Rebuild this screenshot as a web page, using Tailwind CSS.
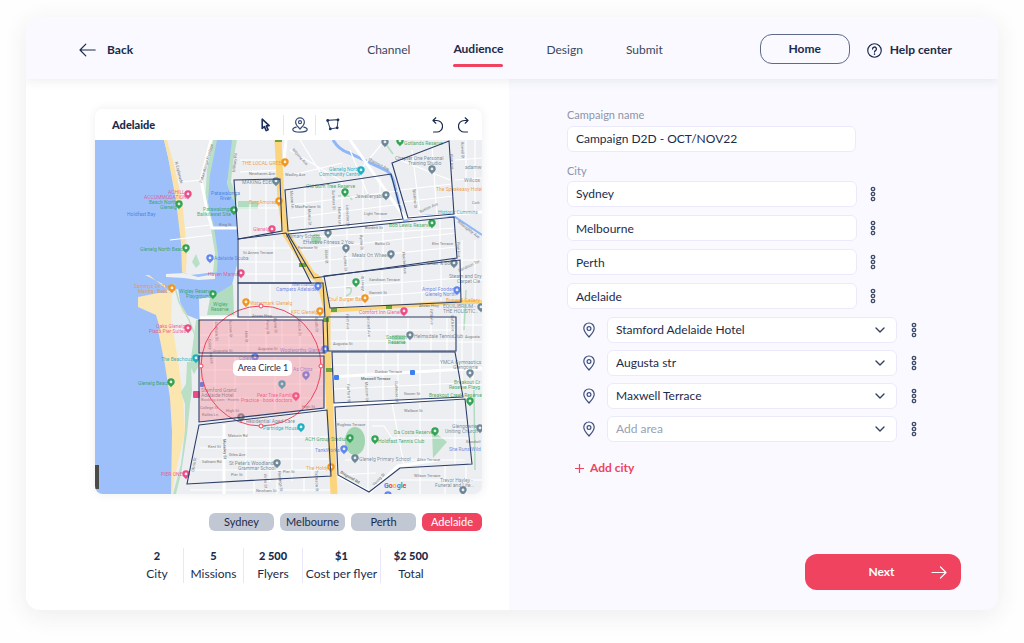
<!DOCTYPE html>
<html lang="en">
<head>
  <meta charset="UTF-8" />
  <meta name="viewport" content="width=device-width, initial-scale=1.0" />
  <title>Campaign - Audience</title>
  <script src="https://cdn.jsdelivr.net/npm/@tailwindcss/browser@4"></script>
</head>
<body class="bg-[#fefefe] text-[#1b2b4b] text-[12px] leading-4 font-['Lato','Open_Sans',sans-serif]">

  <!-- shared icons -->
  <svg class="hidden">
    <symbol id="dots" viewBox="0 0 6 16">
      <g fill="none" stroke="#3d4b69" stroke-width="1.3">
        <circle cx="3" cy="3" r="1.7" />
        <circle cx="3" cy="8" r="1.7" />
        <circle cx="3" cy="13" r="1.7" />
      </g>
    </symbol>
    <symbol id="place" viewBox="0 0 12 16">
      <g fill="none" stroke="#3c4f7c" stroke-width="1.2" stroke-linejoin="round">
        <path d="M6 15C3.6 12.4 0.8 9.6 0.8 6.2a5.2 5.2 0 0 1 10.4 0C11.2 9.6 8.4 12.4 6 15z" />
        <circle cx="6" cy="6.6" r="1.9" />
      </g>
    </symbol>
    <symbol id="chevron" viewBox="0 0 10 6">
      <path d="M1 1l4 4 4-4" fill="none" stroke="#33415f" stroke-width="1.4" stroke-linecap="round" stroke-linejoin="round" />
    </symbol>
    <symbol id="pin" viewBox="0 0 8 10">
      <path d="M4 9.6C3.6 7.8 0.3 6.8 0.3 4a3.7 3.7 0 0 1 7.4 0C7.7 6.8 4.4 7.8 4 9.6z" />
      <circle cx="4" cy="3.9" r="1.4" fill="#fff" fill-opacity=".85" />
    </symbol>
  </svg>

  <div class="mx-[26px] mt-[17px] mb-[33px] min-h-[calc(100vh-50px)] flex flex-col rounded-[14px] bg-white shadow-[0_5px_24px_rgba(40,50,60,0.09)] overflow-hidden">

    <header class="relative z-10 h-[62px] shrink-0 flex items-center bg-[#f9f9ff] pl-[53px] pr-[46px] shadow-[0_2px_10px_rgba(40,50,80,0.09)]">
      <a href="#" class="flex items-center gap-[11px] font-bold pt-[4px]">
        <svg class="w-[17px] h-[14px]" viewBox="0 0 17 14" fill="none" stroke="#1b2b4b" stroke-width="1.2" stroke-linecap="round" stroke-linejoin="round"><path d="M16.2 7H1M6.8 1.2L1 7l5.8 5.8" /></svg>
        Back
      </a>
      <nav class="ml-auto flex items-center gap-[43px] pt-[4px] text-[#3a4662]">
        <a href="#">Channel</a>
        <a href="#" class="relative font-bold text-[#1b2b4b] pb-[3px]">Audience
          <span class="absolute left-0 right-0 top-[23px] h-[3px] rounded-full bg-[#ef4360]"></span>
        </a>
        <a href="#">Design</a>
        <a href="#">Submit</a>
      </nav>
      <button type="button" class="ml-[97px] mt-[2px] w-[90px] h-[30px] rounded-[12px] border border-[#5d6a88] font-bold">Home</button>
      <a href="#" class="ml-[17px] flex items-center gap-[8px] pt-[4px] font-bold">
        <svg class="w-[15px] h-[15px]" viewBox="0 0 14 14" fill="none" stroke="#1b2b4b" stroke-linecap="round" stroke-linejoin="round"><circle cx="7" cy="7" r="6.3" stroke-width="1.1" /><path d="M5.2 5.6a1.8 1.8 0 1 1 2.7 1.5c-.6.4-.9.7-.9 1.3" stroke-width="1.2" /><path d="M7 10.3v.1" stroke-width="1.4" /></svg>
        Help center
      </a>
    </header>

    <main class="flex-1 grid grid-cols-[483fr_489fr]">

      <section class="pl-[69px] pr-[27px] pt-[30px]">
        <div class="rounded-[8px] shadow-[0_0_10px_rgba(40,50,80,0.09)] overflow-hidden">
          <div class="h-[31px] flex items-center bg-white pl-[17px] pr-[13px]">
            <h2 class="text-[11px] font-black">Adelaide</h2>
            <div class="ml-auto flex items-center">
              <button type="button" aria-label="Select" class="w-[34px] h-[20px] flex items-center justify-center">
                <svg class="w-[10px] h-[14px]" viewBox="0 0 10 14" fill="none" stroke="#1f2f5c" stroke-width="1.6" stroke-linejoin="round"><path d="M1.2 1.2v9.2l2.2-1.8 1.8 4 1.9-.9-1.8-3.8 2.9-.3z" /></svg>
              </button>
              <button type="button" aria-label="Add pin" class="w-[33px] h-[20px] flex items-center justify-center border-x border-[#e4e4f6]">
                <svg class="w-[16px] h-[16px]" viewBox="0 0 16 16" fill="none" stroke="#3c4f7c" stroke-width="1.2" stroke-linejoin="round" stroke-linecap="round"><path d="M8 12C6 9.8 3.6 8 3.6 5.2a4.4 4.4 0 0 1 8.8 0C12.4 8 10 9.8 8 12z" /><circle cx="8" cy="5.2" r="1.5" /><path d="M4.2 10.2C2 10.7.8 11.5.8 12.5.8 14 4 15.1 8 15.1s7.2-1.1 7.2-2.6c0-1-1.2-1.8-3.4-2.3" /></svg>
              </button>
              <button type="button" aria-label="Draw area" class="w-[33px] h-[20px] flex items-center justify-center">
                <svg class="w-[14px] h-[13px]" viewBox="0 0 14 13" fill="#1f2f5c" stroke="#3c4f7c" stroke-width="1.1"><path d="M1.5 2.4L12 1.6 11.2 9.8 4.3 11z" fill="none" /><g stroke="none"><circle cx="1.7" cy="2.5" r="1.4" /><circle cx="12" cy="1.8" r="1.4" /><circle cx="11.2" cy="9.8" r="1.4" /><circle cx="4.3" cy="10.9" r="1.4" /></g></svg>
              </button>
            </div>
            <div class="ml-[83px] flex gap-[15px]">
              <button type="button" aria-label="Undo">
                <svg class="w-[11px] h-[16px]" viewBox="0 0 11 16" fill="none" stroke="#1b2b4b" stroke-width="1.2" stroke-linecap="round" stroke-linejoin="round"><path d="M1 3.500h3.800a5.600 5.600 0 0 1 0 11.500H1.500M3.800.8L1 3.500l2.800 2.700" /></svg>
              </button>
              <button type="button" aria-label="Redo">
                <svg class="w-[11px] h-[16px]" viewBox="0 0 11 16" fill="none" stroke="#1b2b4b" stroke-width="1.2" stroke-linecap="round" stroke-linejoin="round"><path d="M10 3.500H6.200a5.600 5.600 0 0 0 0 11.500h3.300M7.200.8L10 3.500 7.200 6.200" /></svg>
              </button>
            </div>
          </div>

          <!-- map -->
          <svg class="block w-full h-auto font-[Roboto,sans-serif]" viewBox="95 140 387 354">
            <rect x="95" y="140" width="387" height="354" fill="#eceef1" />

            <!-- water, beach, parks -->
            <path d="M95 140H164L170 165 178 205 183 250 183 272 200 280 199 300 200 340 173 368 172 494H95z" fill="#9dc0fb" />
            <path d="M164 140h3l7 25 8 35 5 50-1 22-4 1-1-30-5-42-8-44z" fill="#fbe2a8" />
            <path d="M216 140h16l1 20-6 23 8 17 2 30v35l-5 20-15 10-18 4-3 16-18 1-4-25-2-14 28-3 15-2 1-22-5-25-4-27 2-32z" fill="#9dc0fb" />
            <path d="M213 140h4l-7 35-2 27 6 25 4 27-1 18-4 1 2-20-4-24-6-27 2-32zM232 140h5l-4 22-2 20 6 14-1 8-4-6-5-14z" fill="#b9dfc6" />
            <path d="M145 275l4 0 20 16 5-3 5 13 10 17 12 2-3 48-30-1-6-32-6-20-18-8 0-10 20-4 9 0-2-8z" fill="#fbe6b8" />
            <path d="M172 290l6-1 4 24 17 7 1 50-26 3-3-45z" fill="#eef0ef" />
            <path d="M174 284l5 18 10 18 8 20-4 30" fill="none" stroke="#b9dfc6" stroke-width="1.5" />
            <path d="M166 274l18-1 14 4 17-3v5l-17 1-14-2-18-1z" fill="#eef0f2" />
            <path d="M158 330h15l5 30 5 38 2 34-10 43-3 19h-1l1-62-2-34-5-33z" fill="#fce6b0" />
            <path d="M187 362l4 0 1 28-2 14-3 30-6 40-5 20h-3l8-30 4-34v-26l-4-12 5-8z" fill="#b9dfc6" />
            <path d="M196 320h4v44l-6 10-4-8z" fill="#b9dfc6" />
            <path d="M207 315l3-17 23-14 1 31zM238 201h20v8h-20zM432 430l15 12-14 16zM392 335h13v9h-13z" fill="#b2dcc0" />
            <path d="M192 262l4-8 4 10-4 4z" fill="#b9dfc6" />
            <ellipse cx="355" cy="441" rx="10" ry="14" fill="#a0d5b0" />
            <circle cx="316" cy="239" r="5" fill="#a0d5b0" />
            <path d="M346 288q8-2 4 6l-4 2M338 196q12-2 14 4M383 140l10 14M466 290l-2 40M474 390l1 80" fill="none" stroke="#b2dcc0" stroke-width="1.5" />
            <path d="M333 140q6 10 16 13l38 18q6 4 8 16l6 25" fill="none" stroke="#8fb6f7" stroke-width="3" />
            <path d="M403 221q30-10 52-4l27 18" fill="none" stroke="#8fb6f7" stroke-width="2" />

            <!-- minor streets -->
            <g fill="none" stroke="#fff" stroke-width="1.2">
              <path d="M240 160h38M240 172l40-2M250 180v58M266 180v54M236 208h46M240 248h50M238 262h62M238 274h70M256 240v42M274 240v42M292 250v34M170 240l42-5M178 182l25-2M185 228l25-3M250 284v33M270 284v33M290 284v33M308 284v33" />
              <path d="M200 335h124M200 345h124M214 320v33M229 320v33M248 320v33M266 320v33M282 320v33M300 320v33M204 370h120M204 384h120M204 398h120M215 356v62M235 356v60M275 356v54M300 356v52" />
              <path d="M290 150l50 30M300 140l25 40M292 175l50-12M350 150l20 50M385 140l-25 30M400 160l50 20M412 150l8 65M432 146l5 70M455 160l27-2M455 180l27-2M466 140v75M475 140v70M400 190l52-6M402 202l52-6" />
              <path d="M305 188v42M322 186v42M342 182v44M363 180v42M380 178v42M290 205l108-14M290 218l112-14M330 230v45M347 228v44M363 227v44M383 225v43M403 223v42M422 221v42M440 219v42M302 250l154-17M310 262l146-15M297 238l158-10" />
              <path d="M345 275v32M364 274v32M382 271v34M402 268v36M422 266v36M441 264v38M328 288l132-10M328 299l132-9M462 240v60M475 240v60M462 260h20M462 280h20" />
              <path d="M347 318v34M368 318v34M387 318v34M408 318v34M431 318v34M447 318v34M328 330h128M328 341h128M462 305v90M473 310v80M458 325h24M458 342h24" />
              <path d="M348 353v48M366 353v48M383 353v47M398 353v47M420 353v47M440 353v46M333 365h122M334 389l128-6M460 370h22M462 385h22" />
              <path d="M368 406v85M392 403l12 62M336 420h130M372 426h12l8 12h77M345 460h120M420 402v60M455 400v64M336 475l40-2M400 480h82M420 468v26M445 466v28M466 466v28" />
              <path d="M200 437h128M200 448h128M200 459h129M195 470h134M224 424v60M246 420v62M270 417v65M292 415v66M312 412v66M190 490h140M254 480v14M277 480v14M304 478v14" />
            </g>
            <g fill="none" stroke="#fff" stroke-width="3">
              <path d="M211 140l-10 40 6 30 5 18h26M286 140l-2 20M350 140l55 78 78-6M288 232l115-13M330 377l152-9M224 424v70M200 318h125M334 404l130-6M338 476l32 16 28-26 40-6" />
            </g>

            <!-- main roads -->
            <path d="M278 140l3 60 5 34 26 41q7 3 9 10l6 25v42l7 142" fill="none" stroke="#fad57e" stroke-width="7" />
            <path d="M328 311l130-9h24" fill="none" stroke="#fad57e" stroke-width="4" />
            <g fill="#6ea43c">
              <rect x="275" y="140" width="7" height="2" /><rect x="299" y="263" width="7" height="4" /><rect x="331" y="308" width="6" height="4" /><rect x="386" y="305" width="6" height="4" /><rect x="323" y="318" width="6" height="4" /><rect x="326" y="368" width="7" height="4" />
            </g>
            <g fill="#3d7ff0">
              <rect x="334" y="375" width="5" height="5" rx="1" /><rect x="410" y="370" width="5" height="5" rx="1" /><rect x="200" y="382" width="4" height="5" rx="1" />
            </g>
            <rect x="193" y="391" width="7" height="7" rx="1" fill="#ec4c86" />

            <!-- street names -->
            <g font-size="4" fill="#777b82">
              <text x="249" y="175">Newhaven Ave</text>
              <text x="285" y="176">Wadley Ave</text>
              <text x="295" y="208">MacFarlane St</text>
              <text x="364" y="215">Light Terrace</text>
              <text x="365" y="229">Burdett St</text>
              <text x="219" y="226">King St</text>
              <text x="243" y="254">St Annes Terrace</text>
              <text x="298" y="249">Fortrose St</text>
              <text x="375" y="245">Baltic Ct</text>
              <text x="432" y="245">Elm Terrace</text>
              <text x="369" y="281">Sandison Terrace</text>
              <text x="369" y="294">Garnett St</text>
              <text x="419" y="307">Anzac Hwy</text>
              <text x="252" y="317">Anzac Hwy</text>
              <text x="213" y="352">Augusta St</text>
              <text x="258" y="350">Augusta St</text>
              <text x="333" y="345">Augusta St</text>
              <text x="465" y="338">Augusta</text>
              <text x="375" y="373">Dunbar Terrace</text>
              <text x="361" y="380" font-weight="700">Maxwell Terrace</text>
              <text x="404" y="395">Gower St</text>
              <text x="404" y="412">Wallace St</text>
              <text x="337" y="426">Rugless Terrace</text>
              <text x="417" y="461">Allen Terrace</text>
              <text x="414" y="477">Wilson Terrace</text>
              <text x="466" y="443">Goodwil</text>
              <text x="228" y="437">Maturin Rd</text>
              <text x="208" y="448">Kent St</text>
              <text x="229" y="456">Giles Ave</text>
              <text x="202" y="463">Saltram Rd</text>
              <text x="231" y="476">Pier St</text>
              <text x="283" y="473">Pier St</text>
              <text x="256" y="492">Newham St</text>
              <text x="200" y="409">College St</text>
              <text x="202" y="416">Kalles Ln</text>
              <text x="226" y="412">High St</text>
              <text x="302" y="408">High St</text>
              <text x="472" y="204">Cott</text>
              <text transform="translate(175 162) rotate(76)">N Esplanade</text>
              <text transform="translate(202 183) rotate(-74)">Patawalonga Frontage</text>
              <text transform="translate(235 172) rotate(-84)">Military Rd</text>
              <text transform="translate(292 150) rotate(48)">Nilpena Ave</text>
              <text transform="translate(368 160) rotate(28)">Shannon Ave</text>
              <text transform="translate(420 213) rotate(-24)">Buxton Ave</text>
              <text transform="translate(450 154) rotate(86)">Pine Ave</text>
              <text transform="translate(461 142) rotate(88)">Rowell St</text>
              <text transform="translate(413 189) rotate(86)">Sparrow St</text>
              <text transform="translate(457 222) rotate(38)">Willoughby Ave</text>
              <text transform="translate(290 191) rotate(85)">Mason Ln</text>
              <text transform="translate(332 190) rotate(88)">Summer St</text>
              <text transform="translate(308 209) rotate(88)">Morris St</text>
              <text transform="translate(338 207) rotate(88)">Norma Ln</text>
              <text transform="translate(346 205) rotate(88)">Leicester St</text>
              <text transform="translate(325 250) rotate(88)">Elder St</text>
              <text transform="translate(344 256) rotate(88)">Lyons St</text>
              <text transform="translate(360 235) rotate(88)">Byron St</text>
              <text transform="translate(402 252) rotate(85)">Fletcher Ave</text>
              <text transform="translate(457 242) rotate(88)">Pine Ave</text>
              <text transform="translate(364 291) rotate(-90)">Albert St</text>
              <text transform="translate(346 314) rotate(88)">First Ave</text>
              <text transform="translate(367 316) rotate(88)">Second Ave</text>
              <text transform="translate(430 309) rotate(88)">Fifth Ave</text>
              <text transform="translate(451 315) rotate(88)">Sixth Ave</text>
              <text transform="translate(215 322) rotate(88)">Durham St</text>
              <text transform="translate(229 320) rotate(88)">Sussex St</text>
              <text transform="translate(245 331) rotate(88)">Nile St</text>
              <text transform="translate(266 320) rotate(88)">Percy St</text>
              <text transform="translate(274 318) rotate(88)">Byron St</text>
              <text transform="translate(298 318) rotate(88)">Gordon St</text>
              <text transform="translate(315 317) rotate(88)">South St</text>
              <text transform="translate(208 339) rotate(84)">Colley Terrace</text>
              <text transform="translate(347 384) rotate(88)">Fairford St</text>
              <text transform="translate(365 382) rotate(88)">Malcom St</text>
              <text transform="translate(395 381) rotate(88)">Cudmore St</text>
              <text transform="translate(223 439) rotate(88)" font-weight="700">Moseley St</text>
              <text transform="translate(194 472) rotate(-80)">Olivia St</text>
              <text transform="translate(264 474) rotate(88)">Alma St</text>
              <text transform="translate(278 471) rotate(84)">Hastings St</text>
              <text transform="translate(315 470) rotate(88)">Thomson St</text>
              <text transform="translate(340 473) rotate(30)" font-weight="700">Diagonal Rd</text>
              <text transform="translate(374 486) rotate(-45)">Young St</text>
              <text transform="translate(459 272) rotate(-25)">Sandison Ter</text>
            </g>

            <!-- place names -->
            <g font-size="5" fill-opacity=".85">
              <g fill="#3f78d8">
                <text x="127" y="216">Holdfast Bay</text>
                <text x="211" y="195">Patawalonga</text>
                <text x="220" y="200">River</text>
              </g>
              <g fill="#f0932b">
                <text x="242" y="165">THE LOCAL GREEK</text>
                <text x="249" y="204">BurgAmorea</text>
                <text x="134" y="288">Sammys On The</text>
                <text x="138" y="293">Marina - Best...</text>
                <text x="250" y="305">Watermark Glenelg</text>
                <text x="291" y="314">KFC Glenelg</text>
                <text x="328" y="301">Enuf Burger Bar</text>
                <text x="436" y="191">The Speakeasy Hotel</text>
                <text x="446" y="302">Buswell Gallery</text>
                <text x="306" y="470">The Holdy</text>
              </g>
              <g fill="#ec4c86">
                <text x="168" y="194">ACHILL</text>
                <text x="144" y="199">ACCOMMODATION</text>
                <text x="253" y="231">Glenelg</text>
                <text x="208" y="276">Haven Marina</text>
                <text x="156" y="328">Oaks Glenelg</text>
                <text x="149" y="333">Plaza Pier Suites</text>
                <text x="359" y="314">Comfort Inn Glenelg</text>
                <text x="161" y="476">PIER ONE</text>
                <text x="257" y="397">Pear Tree Family</text>
                <text x="241" y="402">Practice - book doctors</text>
              </g>
              <g fill="#2e9e50">
                <text x="149" y="204">Beach North</text>
                <text x="160" y="209">Glenelg</text>
                <text x="203" y="211">Patawalonga</text>
                <text x="197" y="216">Balikilawat Site</text>
                <text x="140" y="251">Glenelg North Beach</text>
                <text x="179" y="293">Wigley Reserve</text>
                <text x="186" y="298">Playground</text>
                <text x="213" y="306">Wigley</text>
                <text x="211" y="311">Reserve</text>
                <text x="138" y="385">Glenelg Beach</text>
                <text x="404" y="145">Gotlands Reserve</text>
                <text x="306" y="188">Old Gum Tree Reserve</text>
                <text x="389" y="227">Bob Lewis Reserve</text>
                <text x="386" y="339">Sandison</text>
                <text x="388" y="344">Reserve</text>
                <text x="454" y="384">Breakout Cr</text>
                <text x="449" y="389">Reserve Playg</text>
                <text x="429" y="397">Breakout Creek Reserve</text>
                <text x="305" y="441">ACH Group Stadium</text>
                <text x="378" y="443">Holdfast Tennis Club</text>
                <text x="394" y="434">Da Costa Reserve</text>
              </g>
              <g fill="#18a3b4">
                <text x="329" y="171">Glenelg North</text>
                <text x="319" y="176">Community Centre</text>
                <text x="438" y="214">Historic Cummins</text>
                <text x="161" y="361">The Beachouse</text>
                <text x="263" y="430">Partridge House</text>
              </g>
              <g fill="#5f7d8e">
                <text x="242" y="184">MAKING EDEN</text>
                <text x="395" y="160">Chapter One Personal</text>
                <text x="408" y="165">Training Studio</text>
                <text x="355" y="198">Jewelleryable</text>
                <text x="286" y="238">Primary School</text>
                <text x="303" y="244">Effective Fitness 2 You</text>
                <text x="352" y="257">Meals On Wheels</text>
                <text x="427" y="265">Chair &amp; Body</text>
                <text x="449" y="278">Steam and Dry</text>
                <text x="457" y="283">Carpet Cle</text>
                <text x="443" y="308">EQUILIBRIUM -</text>
                <text x="443" y="313">THE HOLISTIC..</text>
                <text x="414" y="338">Helmsdale Tennis</text>
                <text x="453" y="338">Club</text>
                <text x="440" y="364">YMCA Gymnastics</text>
                <text x="453" y="369">Glengowrie</text>
                <text x="201" y="392">Stamford Grand</text>
                <text x="201" y="397">Adelaide Hotel</text>
                <text x="201" y="401" font-size="4">Booking.com - Hotels</text>
                <text x="246" y="423">Residential Aged Care</text>
                <text x="229" y="465">St Peter's Woodlands</text>
                <text x="238" y="470">Grammar School</text>
                <text x="359" y="461">Glenelg Primary School</text>
                <text x="452" y="428">Glengowrie</text>
                <text x="445" y="433">Uniting Church</text>
                <text x="440" y="482">Trevor Hayley -</text>
                <text x="435" y="487">Funeral and Life...</text>
                <text x="464" y="182">Willcox</text>
                <text x="465" y="169">adamw</text>
              </g>
              <g fill="#5b79e0">
                <text x="214" y="260">Adelaide Scuba</text>
                <text x="292" y="286">Mermaids</text>
                <text x="276" y="291">Campers Adelaide</text>
                <text x="280" y="352">Woolworths Glenelg</text>
                <text x="239" y="360">Coles</text>
                <text x="293" y="371">As Chips</text>
                <text x="315" y="452">TankWorks</text>
                <text x="449" y="451">She Runs Wild</text>
                <text x="422" y="291">Ampol Foodary</text>
                <text x="425" y="296">Glenelg North</text>
              </g>
            </g>

            <!-- pins -->
            <g>
              <g fill="#f2951f">
                <use href="#pin" x="281" y="158" width="8" height="10" /><use href="#pin" x="275" y="197" width="8" height="10" /><use href="#pin" x="168" y="284" width="8" height="10" /><use href="#pin" x="242" y="298" width="8" height="10" /><use href="#pin" x="316" y="307" width="8" height="10" /><use href="#pin" x="361" y="294" width="8" height="10" /><use href="#pin" x="327" y="463" width="8" height="10" />
              </g>
              <g fill="#ec4c86">
                <use href="#pin" x="184" y="190" width="8" height="10" /><use href="#pin" x="268" y="225" width="8" height="10" /><use href="#pin" x="237" y="269" width="8" height="10" /><use href="#pin" x="184" y="324" width="8" height="10" /><use href="#pin" x="400" y="307" width="8" height="10" /><use href="#pin" x="182" y="470" width="8" height="10" /><use href="#pin" x="292" y="392" width="8" height="10" />
              </g>
              <g fill="#31a354">
                <use href="#pin" x="175" y="200" width="8" height="10" /><use href="#pin" x="230" y="206" width="8" height="10" /><use href="#pin" x="182" y="244" width="8" height="10" /><use href="#pin" x="209" y="290" width="8" height="10" /><use href="#pin" x="167" y="378" width="8" height="10" /><use href="#pin" x="396" y="137" width="8" height="10" /><use href="#pin" x="341" y="188" width="8" height="10" /><use href="#pin" x="428" y="219" width="8" height="10" /><use href="#pin" x="352" y="278" width="8" height="10" /><use href="#pin" x="346" y="434" width="8" height="10" /><use href="#pin" x="371" y="435" width="8" height="10" /><use href="#pin" x="431" y="427" width="8" height="10" /><use href="#pin" x="466" y="397" width="8" height="10" />
              </g>
              <g fill="#1fb0c2">
                <use href="#pin" x="357" y="166" width="8" height="10" /><use href="#pin" x="192" y="354" width="8" height="10" /><use href="#pin" x="297" y="423" width="8" height="10" /><use href="#pin" x="278" y="380" width="8" height="10" />
              </g>
              <g fill="#6d8796">
                <use href="#pin" x="272" y="177" width="8" height="10" /><use href="#pin" x="381" y="138" width="8" height="10" /><use href="#pin" x="428" y="165" width="8" height="10" /><use href="#pin" x="382" y="191" width="8" height="10" /><use href="#pin" x="324" y="229" width="8" height="10" /><use href="#pin" x="342" y="244" width="8" height="10" /><use href="#pin" x="387" y="250" width="8" height="10" /><use href="#pin" x="450" y="259" width="8" height="10" /><use href="#pin" x="406" y="331" width="8" height="10" /><use href="#pin" x="477" y="303" width="8" height="10" /><use href="#pin" x="466" y="369" width="8" height="10" /><use href="#pin" x="237" y="413" width="8" height="10" /><use href="#pin" x="273" y="459" width="8" height="10" /><use href="#pin" x="351" y="454" width="8" height="10" /><use href="#pin" x="476" y="424" width="8" height="10" /><use href="#pin" x="459" y="486" width="8" height="10" />
              </g>
              <g fill="#5e86ec">
                <use href="#pin" x="206" y="254" width="8" height="10" /><use href="#pin" x="314" y="282" width="8" height="10" /><use href="#pin" x="321" y="345" width="8" height="10" /><use href="#pin" x="251" y="353" width="8" height="10" /><use href="#pin" x="302" y="371" width="8" height="10" /><use href="#pin" x="340" y="445" width="8" height="10" /><use href="#pin" x="453" y="286" width="8" height="10" /><use href="#pin" x="384" y="491" width="8" height="10" />
              </g>
            </g>
            <text x="384" y="488" font-size="7" font-weight="700"><tspan fill="#4285f4">G</tspan><tspan fill="#ea4335">o</tspan><tspan fill="#fbbc05">o</tspan><tspan fill="#4285f4">g</tspan><tspan fill="#34a853">l</tspan><tspan fill="#ea4335">e</tspan></text>
            <rect x="95" y="465" width="4" height="24" fill="#4a4a46" />

            <!-- areas -->
            <g fill="#fb7080" fill-opacity=".3">
              <path d="M199 320H323L324 353H199z" />
              <path d="M199 356H324V408L199 422z" />
            </g>
            <circle cx="261" cy="366" r="60" fill="#fb7080" fill-opacity=".06" stroke="#ef4360" stroke-width="1" />
            <g fill="none" stroke="#2b3d68" stroke-width="1.1">
              <path d="M234 180L280 179 282 231 238 239z" />
              <path d="M285 190L391 174 403 219 288 231z" />
              <path d="M392 163L449 141 454 214 408 218z" />
              <path d="M288 234L454 217 457 258 314 278z" />
              <path d="M324 276L460 260 461 302 330 308z" />
              <path d="M238 239L286 233 311 283H238z" />
              <path d="M238 283H323L325 317H238z" />
              <path d="M199 320H323L324 353H199z" />
              <path d="M199 356H324V408L199 422z" />
              <path d="M199 425L327 410 331 476 187 484z" />
              <path d="M327 317H456V351H328z" />
              <path d="M332 352H455L463 397 334 403z" />
              <path d="M335 407L465 399 472 464 400 468 369 492 338 475z" />
            </g>
            <g fill="#fff" stroke="#ef4360" stroke-width="1">
              <circle cx="261" cy="306" r="2" /><circle cx="201" cy="366" r="2" /><circle cx="261" cy="426" r="2" /><circle cx="321" cy="366" r="2" />
            </g>
            <rect x="233" y="360" width="59" height="16" rx="5" fill="#fff" />
            <text x="263" y="371" font-size="9" text-anchor="middle" fill="#1b2b4b" class="font-['Lato','Open_Sans',sans-serif]">Area Circle 1</text>
          </svg>
        </div>

        <div class="mt-[19px] flex justify-end gap-[6px] text-[11px]">
          <button type="button" class="w-[65px] h-[18px] rounded-[6px] bg-[#c1c7d3]">Sydney</button>
          <button type="button" class="w-[65px] h-[18px] rounded-[6px] bg-[#c1c7d3]">Melbourne</button>
          <button type="button" class="w-[65px] h-[18px] rounded-[6px] bg-[#c1c7d3]">Perth</button>
          <button type="button" class="w-[60px] h-[18px] rounded-[6px] bg-[#ef4360] text-white">Adelaide</button>
        </div>

        <dl class="mt-[17px] ml-[36px] flex text-center whitespace-nowrap divide-x divide-[#e8e6fb]">
          <div class="w-[53px] h-[35px]"><dt class="text-[11px] font-black">2</dt><dd class="mt-[2px]">City</dd></div>
          <div class="w-[60px]"><dt class="text-[11px] font-black">5</dt><dd class="mt-[2px]">Missions</dd></div>
          <div class="w-[59px]"><dt class="text-[11px] font-black">2 500</dt><dd class="mt-[2px]">Flyers</dd></div>
          <div class="w-[78px]"><dt class="text-[11px] font-black">$1</dt><dd class="mt-[2px]">Cost per flyer</dd></div>
          <div class="w-[60px]"><dt class="text-[11px] font-black">$2 500</dt><dd class="mt-[2px]">Total</dd></div>
        </dl>
      </section>

      <section class="flex flex-col bg-[#f9f9ff] pl-[58px] pr-[37px] pt-[28px] pb-[20px]">
        <label for="campaign" class="text-[11px] text-[#8d95a8]">Campaign name</label>
        <input id="campaign" type="text" value="Campaign D2D - OCT/NOV22" class="mt-[3px] w-[289px] h-[26px] rounded-[6px] border border-[#ebeafc] bg-white px-[8px] pb-[2px]" />

        <label for="city-1" class="mt-[11px] text-[11px] text-[#8d95a8]">City</label>
        <div class="mt-[2px] flex flex-col gap-[8px]">
          <div class="flex items-center gap-[13px]">
            <input id="city-1" type="text" value="Sydney" class="w-[290px] h-[26px] rounded-[6px] border border-[#ebeafc] bg-white px-[8px] pb-[2px]" />
            <button type="button" aria-label="Sydney options"><svg class="w-[6px] h-[16px]"><use href="#dots" /></svg></button>
          </div>
          <div class="flex items-center gap-[13px]">
            <input type="text" aria-label="City 2" value="Melbourne" class="w-[290px] h-[26px] rounded-[6px] border border-[#ebeafc] bg-white px-[8px]" />
            <button type="button" aria-label="Melbourne options"><svg class="w-[6px] h-[16px]"><use href="#dots" /></svg></button>
          </div>
          <div class="flex items-center gap-[13px]">
            <input type="text" aria-label="City 3" value="Perth" class="w-[290px] h-[26px] rounded-[6px] border border-[#ebeafc] bg-white px-[8px]" />
            <button type="button" aria-label="Perth options"><svg class="w-[6px] h-[16px]"><use href="#dots" /></svg></button>
          </div>
          <div class="flex items-center gap-[13px]">
            <input type="text" aria-label="City 4" value="Adelaide" class="w-[290px] h-[26px] rounded-[6px] border border-[#ebeafc] bg-white px-[8px]" />
            <button type="button" aria-label="Adelaide options"><svg class="w-[6px] h-[16px]"><use href="#dots" /></svg></button>
          </div>
        </div>

        <div class="mt-[8px] ml-[16px] flex flex-col gap-[7px]">
          <div class="flex items-center">
            <svg class="w-[12px] h-[16px]"><use href="#place" /></svg>
            <div class="relative ml-[12px]">
              <select aria-label="Area 1" class="appearance-none w-[290px] h-[26px] rounded-[6px] border border-[#ebeafc] bg-white px-[8px]"><option>Stamford Adelaide Hotel</option></select>
              <svg class="pointer-events-none absolute right-[12px] top-[10px] w-[10px] h-[6px]"><use href="#chevron" /></svg>
            </div>
            <button type="button" aria-label="Area 1 options" class="ml-[14px]"><svg class="w-[6px] h-[16px]"><use href="#dots" /></svg></button>
          </div>
          <div class="flex items-center">
            <svg class="w-[12px] h-[16px]"><use href="#place" /></svg>
            <div class="relative ml-[12px]">
              <select aria-label="Area 2" class="appearance-none w-[290px] h-[26px] rounded-[6px] border border-[#ebeafc] bg-white px-[8px]"><option>Augusta str</option></select>
              <svg class="pointer-events-none absolute right-[12px] top-[10px] w-[10px] h-[6px]"><use href="#chevron" /></svg>
            </div>
            <button type="button" aria-label="Area 2 options" class="ml-[14px]"><svg class="w-[6px] h-[16px]"><use href="#dots" /></svg></button>
          </div>
          <div class="flex items-center">
            <svg class="w-[12px] h-[16px]"><use href="#place" /></svg>
            <div class="relative ml-[12px]">
              <select aria-label="Area 3" class="appearance-none w-[290px] h-[26px] rounded-[6px] border border-[#ebeafc] bg-white px-[8px]"><option>Maxwell Terrace</option></select>
              <svg class="pointer-events-none absolute right-[12px] top-[10px] w-[10px] h-[6px]"><use href="#chevron" /></svg>
            </div>
            <button type="button" aria-label="Area 3 options" class="ml-[14px]"><svg class="w-[6px] h-[16px]"><use href="#dots" /></svg></button>
          </div>
          <div class="flex items-center">
            <svg class="w-[12px] h-[16px]"><use href="#place" /></svg>
            <div class="relative ml-[12px]">
              <select aria-label="Area 4" class="appearance-none w-[290px] h-[26px] rounded-[6px] border border-[#ebeafc] bg-white px-[8px] text-[#9aa1b2]"><option>Add area</option></select>
              <svg class="pointer-events-none absolute right-[12px] top-[10px] w-[10px] h-[6px]"><use href="#chevron" /></svg>
            </div>
            <button type="button" aria-label="Area 4 options" class="ml-[14px]"><svg class="w-[6px] h-[16px]"><use href="#dots" /></svg></button>
          </div>
        </div>

        <button type="button" class="mt-[18px] ml-[8px] self-start flex items-center gap-[6px] font-bold text-[#ef4360]">
          <svg class="w-[9px] h-[9px]" viewBox="0 0 9 9" stroke="#ef4360" stroke-width="1.2"><path d="M4.500 0v9M0 4.500h9" /></svg>
          Add city
        </button>

        <button type="button" class="mt-auto self-end relative w-[156px] h-[36px] rounded-[12px] bg-[#ef4360] pr-[3px] text-white font-bold">
          Next
          <svg class="absolute right-[14px] top-[12px] w-[16px] h-[13px]" viewBox="0 0 16 13" fill="none" stroke="#fff" stroke-width="1.2" stroke-linecap="round" stroke-linejoin="round"><path d="M1 6.500h14M9.500 1L15 6.500 9.500 12" /></svg>
        </button>
      </section>
    </main>
  </div>
</body>
</html>
